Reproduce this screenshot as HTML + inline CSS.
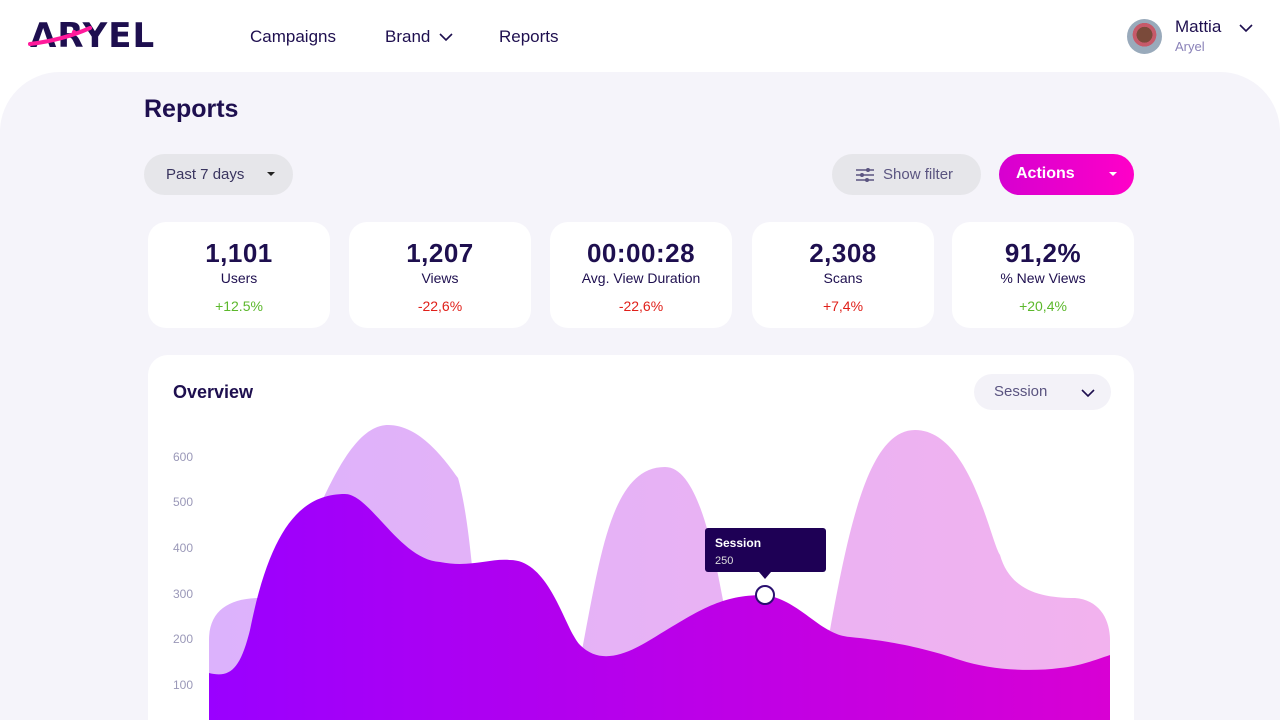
<!DOCTYPE html>
<html><head><meta charset="utf-8"><style>
*{box-sizing:border-box;margin:0;padding:0}
html,body{width:1280px;height:720px;overflow:hidden}
body{background:#fff;font-family:"Liberation Sans",sans-serif;color:#1e0f4f;position:relative}
.nav{position:absolute;top:27px;font-size:17px;color:#1e0f4f}
.main{position:absolute;left:0;top:72px;width:1280px;height:648px;background:#f5f4fa;border-radius:60px 60px 0 0;overflow:hidden}
.abs{position:absolute}
.pill{position:absolute;border-radius:21px;background:#e6e6ea;height:41px}
.card{position:absolute;top:222px;width:182px;height:106px;background:#fff;border-radius:18px;text-align:center}
.card .n{font-size:26px;font-weight:bold;margin-top:16px;color:#1e0f4f;letter-spacing:0.5px}
.card .l{font-size:14px;margin-top:1px}
.card .p{font-size:14px;margin-top:12px}
.g{color:#5cb82c}.r{color:#e0201a}
.ax{position:absolute;left:173px;font-size:12px;color:#9a98b8}
</style></head><body>
<div class="abs" style="left:30px;top:16px;font-size:34px;font-weight:bold;color:#1e0f4f;letter-spacing:1px;font-family:'DejaVu Sans',sans-serif">ΛRYEL</div>
<svg class="abs" style="left:28px;top:26px" width="70" height="22"><path d="M2 18 Q35 14 62 2" stroke="#ff1a9b" stroke-width="4" fill="none" stroke-linecap="round"/><circle cx="46" cy="6" r="2" fill="#ff1a9b"/></svg>
<div class="nav" style="left:250px">Campaigns</div>
<div class="nav" style="left:385px">Brand</div>
<svg class="abs" style="left:439px;top:33px" width="14" height="9"><path d="M1 1l6 6 6-6" stroke="#1e0f4f" stroke-width="1.6" fill="none"/></svg>
<div class="nav" style="left:499px">Reports</div>
<div class="abs" style="left:1127px;top:19px;width:35px;height:35px;border-radius:50%;background:radial-gradient(circle at 50% 45%,#7a4a3a 0 30%,#c65a6a 31% 45%,#9ab 46%)"></div>
<div class="abs" style="left:1175px;top:17px;font-size:17px">Mattia</div>
<div class="abs" style="left:1175px;top:39px;font-size:13px;color:#8a82b8">Aryel</div>
<svg class="abs" style="left:1239px;top:24px" width="14" height="9"><path d="M1 1l6 6 6-6" stroke="#1e0f4f" stroke-width="1.6" fill="none"/></svg>

<div class="main"></div>
<div class="abs" style="left:144px;top:95px;font-size:25px;font-weight:bold;color:#1e0f4f">Reports</div>
<div class="pill" style="left:144px;top:154px;width:149px"><span class="abs" style="left:22px;top:12px;font-size:15px;color:#3a3560">Past 7 days</span><span class="abs" style="left:123px;top:18px;border:4px solid transparent;border-top:4px solid #222"></span></div>
<div class="pill" style="left:832px;top:154px;width:149px"><svg class="abs" style="left:24px;top:13px" width="18" height="16"><g stroke="#5a5480" stroke-width="1.5"><path d="M0 3h18M0 8h18M0 13h18"/></g><g fill="#5a5480"><circle cx="12" cy="3" r="2"/><circle cx="6" cy="8" r="2"/><circle cx="11" cy="13" r="2"/></g></svg><span class="abs" style="left:51px;top:12px;font-size:15px;color:#5a5480">Show filter</span></div>
<div class="pill" style="left:999px;top:154px;width:135px;background:linear-gradient(90deg,#d600d0,#ff00c8)"><span class="abs" style="left:17px;top:11px;font-size:16px;font-weight:bold;color:#fff">Actions</span><span class="abs" style="left:110px;top:18px;border:4px solid transparent;border-top:4px solid #fff"></span></div>

<div class="card" style="left:148px"><div class="n">1,101</div><div class="l">Users</div><div class="p g">+12.5%</div></div>
<div class="card" style="left:349px"><div class="n">1,207</div><div class="l">Views</div><div class="p r">-22,6%</div></div>
<div class="card" style="left:550px"><div class="n">00:00:28</div><div class="l">Avg. View Duration</div><div class="p r">-22,6%</div></div>
<div class="card" style="left:752px"><div class="n">2,308</div><div class="l">Scans</div><div class="p r">+7,4%</div></div>
<div class="card" style="left:952px"><div class="n">91,2%</div><div class="l">% New Views</div><div class="p g">+20,4%</div></div>

<div class="abs" style="left:148px;top:355px;width:986px;height:365px;background:#fff;border-radius:20px 20px 0 0"></div>
<div class="abs" style="left:173px;top:382px;font-size:18px;font-weight:bold">Overview</div>
<div class="pill" style="left:974px;top:374px;width:137px;height:36px;background:#f3f2f8"><span class="abs" style="left:20px;top:9px;font-size:15px;color:#5a5480">Session</span><svg class="abs" style="left:107px;top:15px" width="14" height="9"><path d="M1 1l6 6 6-6" stroke="#1e0f4f" stroke-width="1.6" fill="none"/></svg></div>
<div class="ax" style="top:450px">600</div><div class="ax" style="top:495px">500</div><div class="ax" style="top:541px">400</div><div class="ax" style="top:587px">300</div><div class="ax" style="top:632px">200</div><div class="ax" style="top:678px">100</div>

<svg class="abs" style="left:0;top:0" width="1280" height="720">
<defs>
<linearGradient id="lg" x1="0" x2="1"><stop offset="0" stop-color="#dcb2fc"/><stop offset="1" stop-color="#f2b2ee"/></linearGradient>
<linearGradient id="dg" x1="0" x2="1"><stop offset="0" stop-color="#9a00ff"/><stop offset="1" stop-color="#d800d4"/></linearGradient>
</defs>
<path fill="url(#lg)" d="M209 720V640C209 610 230 598 260 598C300 598 330 425 388 425C420 425 445 460 458 478C470 520 475 600 480 660L580 660C600 560 610 467 665 467C700 467 715 560 725 610L830 630C850 520 870 430 915 430C970 430 990 540 1000 555C1010 590 1040 598 1075 598C1100 600 1110 620 1110 640V720Z"/>
<path fill="url(#dg)" d="M209 720V673C230 678 240 670 250 630C270 530 300 494 345 494C370 494 400 560 440 562C470 568 490 558 510 560C550 560 565 630 580 645C600 665 625 655 650 640C700 610 720 595 765 595C800 600 820 635 850 637C900 642 930 650 960 660C990 670 1030 672 1060 668C1080 666 1095 660 1110 655V720Z"/>
<circle cx="765" cy="595" r="9" fill="#fff" stroke="#2a1070" stroke-width="2"/>
<rect x="705" y="528" width="121" height="44" rx="3" fill="#1e0055"/>
<path d="M759 572h12l-6 7z" fill="#1e0055"/>
<text x="715" y="547" font-family="Liberation Sans" font-weight="bold" font-size="12" fill="#fff">Session</text>
<text x="715" y="564" font-family="Liberation Sans" font-size="11" fill="#ddd">250</text>
</svg>
</body></html>
